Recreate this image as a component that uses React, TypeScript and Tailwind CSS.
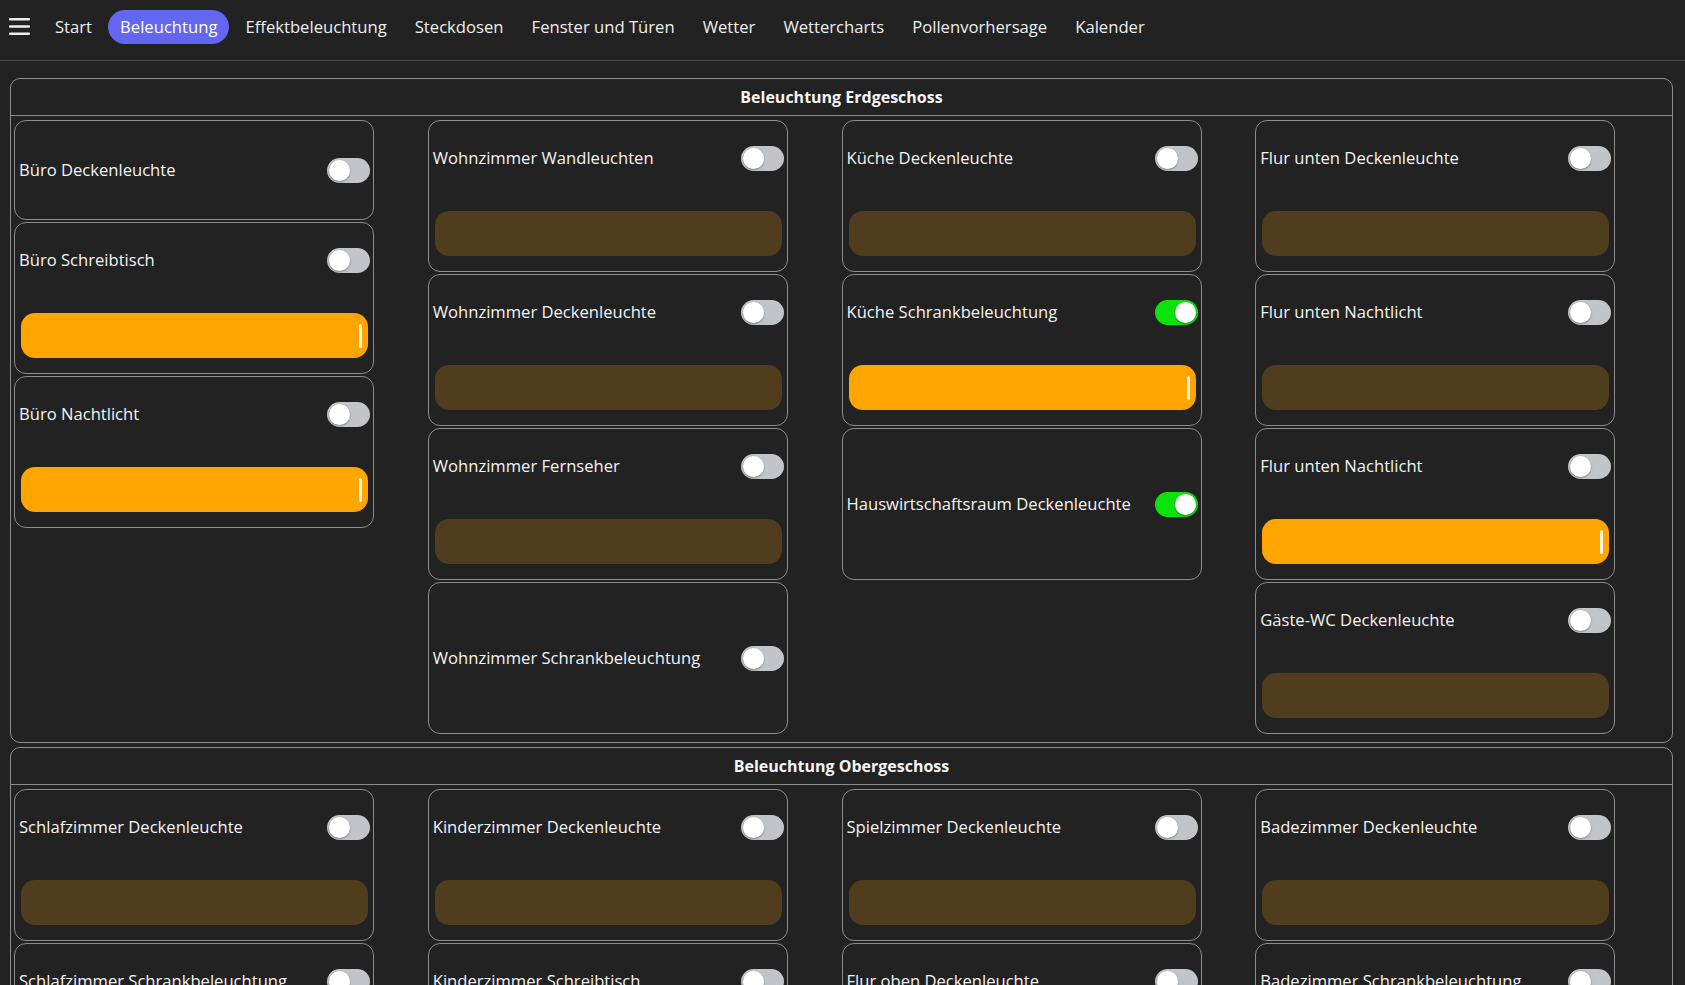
import React from "react";

type Item = {
  name: string;
  on?: boolean;
  slider?: "on" | "off" | null;
  h?: number;
};

const erdgeschoss: Item[][] = [
  [
    { name: "Büro Deckenleuchte", slider: null, h: 100 },
    { name: "Büro Schreibtisch", slider: "on" },
    { name: "Büro Nachtlicht", slider: "on" },
  ],
  [
    { name: "Wohnzimmer Wandleuchten", slider: "off" },
    { name: "Wohnzimmer Deckenleuchte", slider: "off" },
    { name: "Wohnzimmer Fernseher", slider: "off" },
    { name: "Wohnzimmer Schrankbeleuchtung", slider: null },
  ],
  [
    { name: "Küche Deckenleuchte", slider: "off" },
    { name: "Küche Schrankbeleuchtung", on: true, slider: "on" },
    { name: "Hauswirtschaftsraum Deckenleuchte", on: true, slider: null },
  ],
  [
    { name: "Flur unten Deckenleuchte", slider: "off" },
    { name: "Flur unten Nachtlicht", slider: "off" },
    { name: "Flur unten Nachtlicht", slider: "on" },
    { name: "Gäste-WC Deckenleuchte", slider: "off" },
  ],
];

const obergeschoss: Item[][] = [
  [
    { name: "Schlafzimmer Deckenleuchte", slider: "off" },
    { name: "Schlafzimmer Schrankbeleuchtung", slider: "off" },
  ],
  [
    { name: "Kinderzimmer Deckenleuchte", slider: "off" },
    { name: "Kinderzimmer Schreibtisch", slider: "off" },
  ],
  [
    { name: "Spielzimmer Deckenleuchte", slider: "off" },
    { name: "Flur oben Deckenleuchte", slider: "off" },
  ],
  [
    { name: "Badezimmer Deckenleuchte", slider: "off" },
    { name: "Badezimmer Schrankbeleuchtung", slider: "off" },
  ],
];

function Toggle({ on }: { on?: boolean }) {
  return (
    <div
      className={
        "relative h-[25px] w-[43px] shrink-0 rounded-full " +
        (on ? "bg-[#0be30b]" : "bg-[#c1c4c8]")
      }
    >
      <div
        className={
          "absolute top-[2px] h-[21px] w-[21px] rounded-full bg-white shadow-[0_1px_2px_rgba(0,0,0,0.35)] " +
          (on ? "right-[2px]" : "left-[2px]")
        }
      />
    </div>
  );
}

function Slider({ on }: { on: boolean }) {
  return (
    <div
      className={
        "mx-[2px] mt-[40px] flex h-[45px] items-center justify-end rounded-[14px] pr-[6px] " +
        (on ? "bg-[#ffa500]" : "bg-[#4f3d1d]")
      }
    >
      {on && <div className="h-[24px] w-[3px] rounded-full bg-[#fff4dc]" />}
    </div>
  );
}

function Card({ item }: { item: Item }) {
  const h = item.h ?? 152;
  if (!item.slider) {
    return (
      <div
        className="flex w-[360px] items-center justify-between rounded-[12px] border border-[#8c8c8c] pl-[4px] pr-[3px]"
        style={{ height: h }}
      >
        <span className="text-[16.6px] text-[#f4f4f4]">{item.name}</span>
        <Toggle on={item.on} />
      </div>
    );
  }
  return (
    <div
      className="w-[360px] rounded-[12px] border border-[#8c8c8c] pl-[4px] pr-[3px]"
      style={{ height: h }}
    >
      <div className="mt-[25px] flex h-[25px] items-center justify-between">
        <span className="text-[16.6px] text-[#f4f4f4]">{item.name}</span>
        <Toggle on={item.on} />
      </div>
      <Slider on={item.slider === "on"} />
    </div>
  );
}

function Section({ title, cols }: { title: string; cols: Item[][] }) {
  return (
    <section className="rounded-[10px] border border-[#8c8c8c] pb-[8px]">
      <div className="h-[37px] border-b border-[#8c8c8c] pt-[7px]">
        <div className="mx-auto h-[21px] overflow-hidden text-center text-[16px] font-bold leading-[22px] text-[#f5f5f5]">
          {title}
        </div>
      </div>
      <div className="grid grid-cols-4 px-[3px] pt-[4px]">
        {cols.map((c, i) => (
          <div key={i} className="flex flex-col gap-[2px]">
            {c.map((it, j) => (
              <Card key={j} item={it} />
            ))}
          </div>
        ))}
      </div>
    </section>
  );
}

const navItems = [
  "Start",
  "Beleuchtung",
  "Effektbeleuchtung",
  "Steckdosen",
  "Fenster und Türen",
  "Wetter",
  "Wettercharts",
  "Pollenvorhersage",
  "Kalender",
];

export default function App() {
  return (
    <div
      className="h-screen overflow-hidden bg-[#222222] text-[#eeeeee]"
      style={{ fontFamily: '"Open Sans", "Noto Sans", sans-serif' }}
    >
      <nav className="flex h-[61px] items-start border-b border-[#474747] pl-[9px] pt-[10px]">
        <svg width="21" height="17" viewBox="0 0 21 17" className="mt-[8px]">
          <rect x="0" y="0" width="21" height="2.5" rx="1" fill="#eeeeee" />
          <rect x="0" y="7.2" width="21" height="2.5" rx="1" fill="#eeeeee" />
          <rect x="0" y="14.5" width="21" height="2.5" rx="1" fill="#eeeeee" />
        </svg>
        <div className="ml-[13px] flex gap-[4px]">
          {navItems.map((n) => (
            <div
              key={n}
              className={
                "flex h-[34px] items-center rounded-full px-[12px] pt-[1px] text-[16.65px] " +
                (n === "Beleuchtung" ? "bg-[#6366f1] text-white" : "text-[#eeeeee]")
              }
            >
              {n}
            </div>
          ))}
        </div>
      </nav>
      <main className="ml-[10px] mr-[12px] mt-[17px] flex flex-col gap-[4px]">
        <Section title="Beleuchtung Erdgeschoss" cols={erdgeschoss} />
        <Section title="Beleuchtung Obergeschoss" cols={obergeschoss} />
      </main>
    </div>
  );
}
